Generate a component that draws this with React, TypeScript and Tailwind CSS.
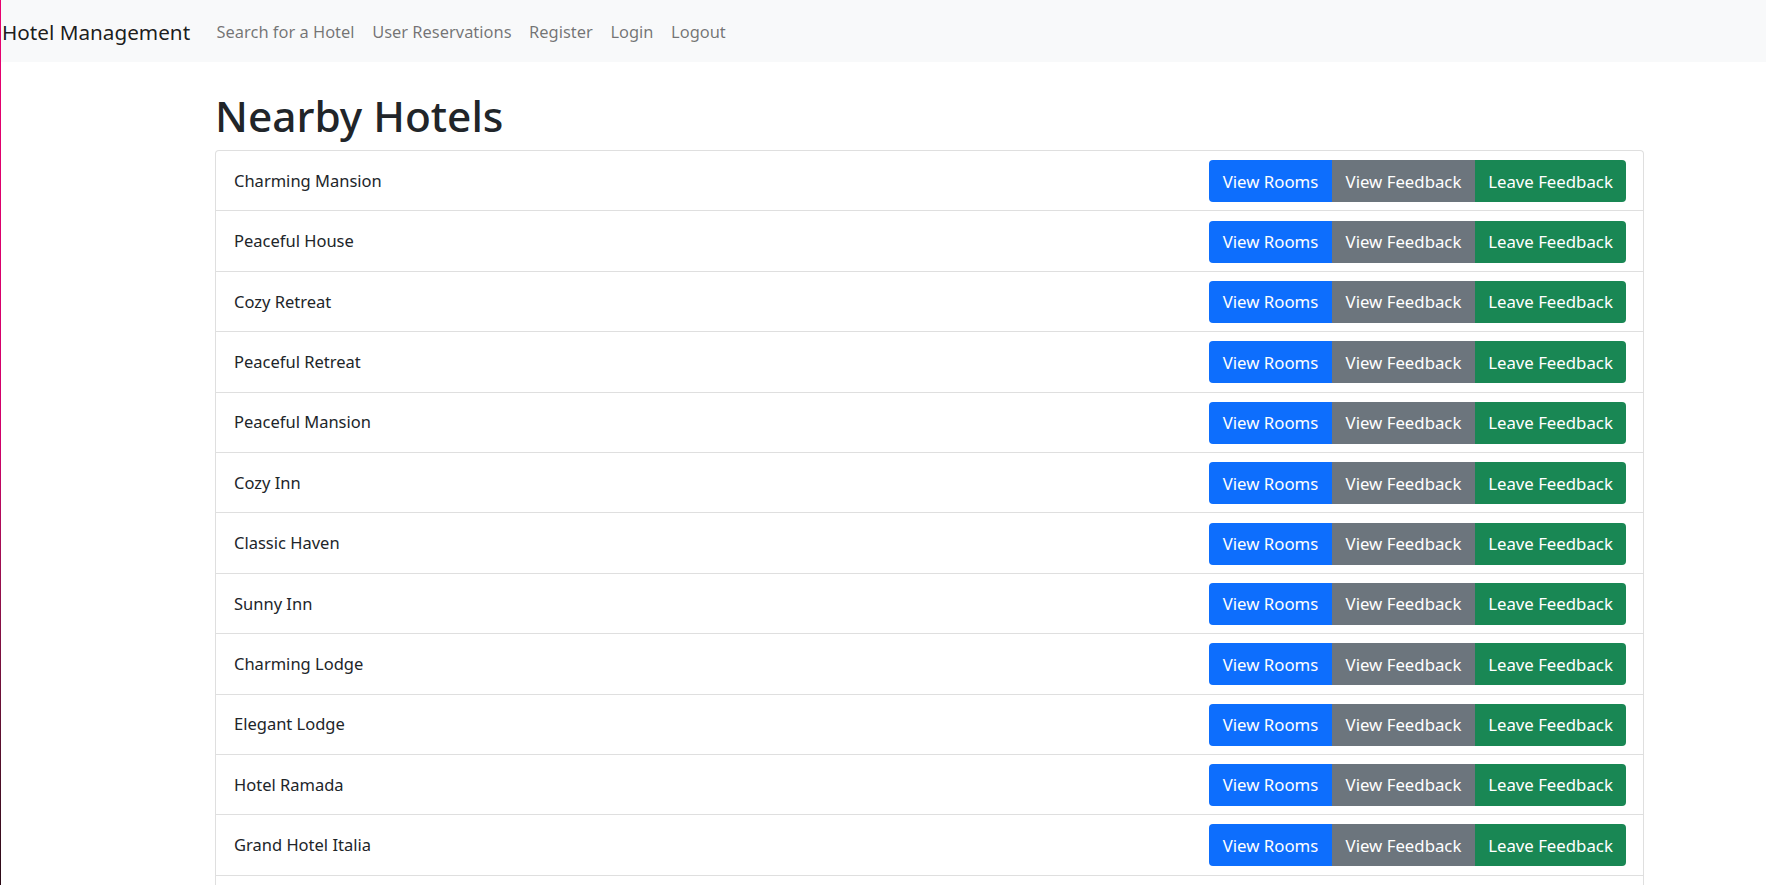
import React from 'react';

const hotels = [
  'Charming Mansion',
  'Peaceful House',
  'Cozy Retreat',
  'Peaceful Retreat',
  'Peaceful Mansion',
  'Cozy Inn',
  'Classic Haven',
  'Sunny Inn',
  'Charming Lodge',
  'Elegant Lodge',
  'Hotel Ramada',
  'Grand Hotel Italia',
];

const navLinks = ['Search for a Hotel', 'User Reservations', 'Register', 'Login', 'Logout'];

const font = { fontFamily: '"Noto Sans", "Open Sans", Arial, sans-serif' };

const Navbar = () => (
  <nav className="flex h-[62px] items-center bg-[#f8f9fa] pt-[2px]">
    <a className="ml-[2px] mr-[17.6px] text-[20.7px] leading-[33px] text-[rgba(0,0,0,0.9)]">Hotel Management</a>
    <ul className="flex items-center">
      {navLinks.map((link) => (
        <li key={link}>
          <a className="block px-[8.8px] text-[16.45px] leading-[26.4px] text-[rgba(0,0,0,0.55)]">{link}</a>
        </li>
      ))}
    </ul>
  </nav>
);

const HotelRow = ({ name }: { name: string }) => (
  <li className="flex h-[60.4px] items-center justify-between border-b border-[#dfdfdf] pl-[18px] pr-[17px] pt-px">
    <span className="text-[16.5px] text-[#212529]">{name}</span>
    <div className="flex h-[42px] text-[16.8px] text-white">
      <button className="w-[123px] rounded-l-[4px] bg-[#0d6efd]">View Rooms</button>
      <button className="w-[143px] bg-[#6c757d]">View Feedback</button>
      <button className="w-[151px] rounded-r-[4px] bg-[#198754]">Leave Feedback</button>
    </div>
  </li>
);

export default function App() {
  return (
    <div className="relative h-[885px] overflow-hidden bg-white" style={font}>
      <div className="absolute left-0 top-0 h-full w-px bg-gradient-to-b from-[#e8006f] via-[#d0006a] to-[#2a0a16]" />
      <Navbar />
      <main className="ml-[215px] w-[1429px]">
        <h1 className="mt-[28px] mb-[7.2px] text-[42.4px] font-medium leading-[52.8px] text-[#212529]">Nearby Hotels</h1>
        <ul className="rounded-[4px] border-x border-t border-[#dfdfdf]">
          {hotels.map((h) => (
            <HotelRow key={h} name={h} />
          ))}
          <li className="h-[40px]" />
        </ul>
      </main>
    </div>
  );
}
